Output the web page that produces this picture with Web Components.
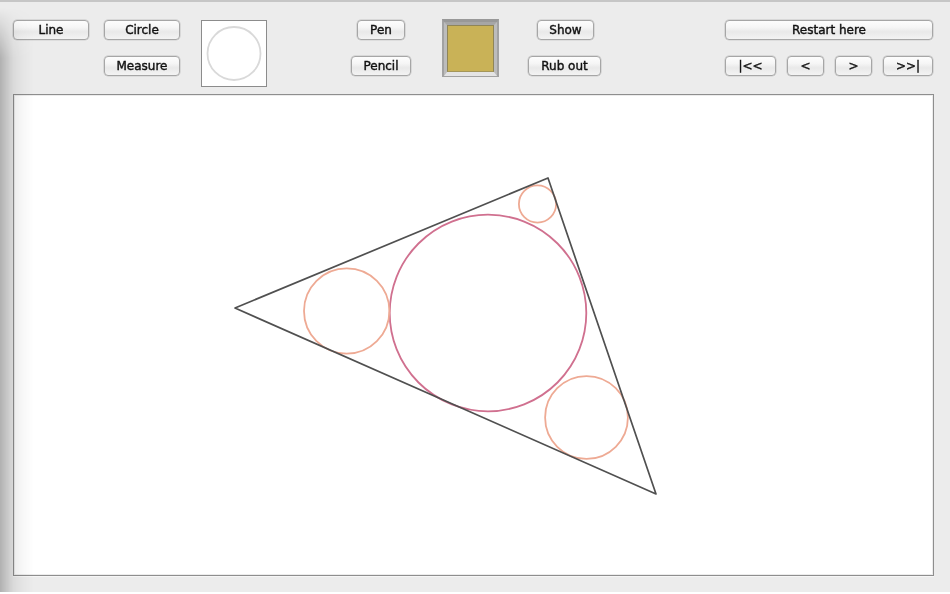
<!DOCTYPE html>
<html>
<head>
<meta charset="utf-8">
<title>Sketch</title>
<style>
  html, body { margin: 0; padding: 0; background: #fff; }
</style>
</head>
<body>
<sketch-window>
  <tool-group slot="tools" cols="76px 76px" style="margin-left:13px">
    <mac-button>Line</mac-button>
    <mac-button>Circle</mac-button>
    <span></span>
    <mac-button>Measure</mac-button>
  </tool-group>
  <shape-preview slot="tools" style="margin-left:21px"></shape-preview>
  <tool-group slot="tools" cols="60px" style="margin-left:84px">
    <mac-button style="width:48px;justify-self:center">Pen</mac-button>
    <mac-button>Pencil</mac-button>
  </tool-group>
  <colour-well slot="tools" style="margin-left:31px"></colour-well>
  <tool-group slot="tools" cols="73px" style="margin-left:29px">
    <mac-button style="width:57px;justify-self:end;margin-right:7px">Show</mac-button>
    <mac-button>Rub out</mac-button>
  </tool-group>
  <tool-group slot="tools" cols="51px 37px 37px 50px" gap="11px" style="margin-left:124px">
    <mac-button style="grid-column:1 / -1">Restart here</mac-button>
    <mac-button>|&lt;&lt;</mac-button>
    <mac-button>&lt;</mac-button>
    <mac-button>&gt;</mac-button>
    <mac-button>&gt;&gt;|</mac-button>
  </tool-group>
  <geometry-canvas slot="canvas"></geometry-canvas>
</sketch-window>

<script>
(function() {
  class SketchWindow extends HTMLElement {
    connectedCallback() {
      this._root = this.attachShadow({mode: 'open'});
      this._root.innerHTML =
        `<style>
          :host {
            background: #ececec;
            border-top: 2px solid #c6c6c6;
            box-sizing: border-box;
            display: block;
            font: 12px "DejaVu Sans", "Liberation Sans", sans-serif;
            height: 592px;
            overflow: hidden;
            position: relative;
            width: 950px;
          }
          #tools {
            align-items: flex-start;
            box-sizing: border-box;
            display: flex;
            height: 92px;
            padding-top: 18px;
          }
          #canvas {
            padding: 0 16px 0 13px;
          }
          #shade {
            background: linear-gradient(to right, rgba(0,0,0,.25), rgba(0,0,0,.17) 6px, rgba(0,0,0,.08) 13px, rgba(0,0,0,.03) 22px, rgba(0,0,0,0) 34px);
            bottom: 0;
            left: 0;
            -webkit-mask-image: linear-gradient(to bottom, transparent 6px, #000 56px);
            mask-image: linear-gradient(to bottom, transparent 6px, #000 56px);
            pointer-events: none;
            position: absolute;
            top: 0;
            width: 36px;
          }
        </style>
        <div id="tools"><slot name="tools"></slot></div>
        <div id="canvas"><slot name="canvas"></slot></div>
        <div id="shade"></div>`;
    }
  }

  class ToolGroup extends HTMLElement {
    connectedCallback() {
      this._root = this.attachShadow({mode: 'open'});
      const cols = this.getAttribute('cols');
      const gap = this.getAttribute('gap') || '15px';
      this._root.innerHTML =
        `<style>
          :host {
            column-gap: ${gap};
            display: grid;
            flex: none;
            grid-template-columns: ${cols};
            grid-template-rows: 20px 20px;
            row-gap: 16px;
          }
        </style>
        <slot></slot>`;
    }
  }

  class MacButton extends HTMLElement {
    connectedCallback() {
      this._root = this.attachShadow({mode: 'open'});
      this._root.innerHTML =
        `<style>
          :host {
            align-items: center;
            background: linear-gradient(to bottom, #fdfdfd 0%, #f6f6f6 35%, #e9e9e9 60%, #f3f3f3 100%);
            border: 1px solid #a6a6a6;
            border-radius: 4px;
            box-shadow: 0 0 0 .5px #c4c4c4, 0 1px 0 #f7f7f7;
            box-sizing: border-box;
            color: #111;
            display: flex;
            font-size: 12px;
            height: 20px;
            justify-content: center;
          }
          span {
            filter: blur(.35px);
            line-height: 18px;
            -webkit-text-stroke: .4px #111;
            white-space: nowrap;
          }
        </style>
        <span><slot></slot></span>`;
    }
  }

  class ShapePreview extends HTMLElement {
    connectedCallback() {
      this._root = this.attachShadow({mode: 'open'});
      this._root.innerHTML =
        `<style>
          :host {
            background: #fff;
            border: 1px solid #8c8c8c;
            box-sizing: border-box;
            display: block;
            flex: none;
            height: 67px;
            width: 66px;
          }
          svg { display: block; }
        </style>
        <svg width="64" height="65" viewBox="0 0 64 65">
          <circle cx="32" cy="32.5" r="26.5" fill="none" stroke="#d9d9d9" stroke-width="1.8"/>
        </svg>`;
    }
  }

  class ColourWell extends HTMLElement {
    connectedCallback() {
      this._root = this.attachShadow({mode: 'open'});
      this._root.innerHTML =
        `<style>
          :host {
            border: 2px solid #a2a2a2;
            border-bottom-width: 1px;
            border-top: 3px solid #989898;
            box-sizing: border-box;
            display: block;
            flex: none;
            height: 58px;
            margin-top: -1px;
            width: 57px;
          }
          #frame {
            border-color: #a6a6a6 #bcbcbc #e4e4e4 #bcbcbc;
            border-style: solid;
            border-width: 3px 3px 4px 3px;
            box-sizing: border-box;
            height: 100%;
          }
          #colour {
            background: #c9b257;
            border: 1px solid #8f8558;
            border-bottom-color: #a4965a;
            box-sizing: border-box;
            height: 100%;
          }
        </style>
        <div id="frame"><div id="colour"></div></div>`;
    }
  }

  // picture coordinates are page coordinates, hence the viewBox offset
  const circles = [
    {cx: 488, cy: 313, r: 98.3, colour: '#d0708f'},
    {cx: 346.7, cy: 311, r: 42.7, colour: '#eeaa94'},
    {cx: 537.5, cy: 204, r: 18.6, colour: '#eeaa94'},
    {cx: 586.5, cy: 417.5, r: 41.4, colour: '#eeaa94'}
  ];

  class GeometryCanvas extends HTMLElement {
    connectedCallback() {
      this._root = this.attachShadow({mode: 'open'});
      this._root.innerHTML =
        `<style>
          :host {
            background: #fff;
            border: 1px solid #8e8e8e;
            box-shadow: inset 0 0 0 1px #ececec, 0 1px 0 #f6f6f6;
            box-sizing: border-box;
            display: block;
            height: 482px;
            width: 921px;
          }
          svg {
            display: block;
            filter: blur(.3px);
          }
        </style>
        <svg width="919" height="480" viewBox="14 95 919 480">
          ${circles.map(c => `<circle cx="${c.cx}" cy="${c.cy}" r="${c.r}" fill="none" stroke="${c.colour}" stroke-width="1.8"/>`).join('')}
          <polygon points="235,308 548,178 656,494" fill="none" stroke="#505050" stroke-width="1.7" stroke-linejoin="round"/>
        </svg>`;
    }
  }

  customElements.define('sketch-window', SketchWindow);
  customElements.define('tool-group', ToolGroup);
  customElements.define('mac-button', MacButton);
  customElements.define('shape-preview', ShapePreview);
  customElements.define('colour-well', ColourWell);
  customElements.define('geometry-canvas', GeometryCanvas);
}());
</script>
</body>
</html>
